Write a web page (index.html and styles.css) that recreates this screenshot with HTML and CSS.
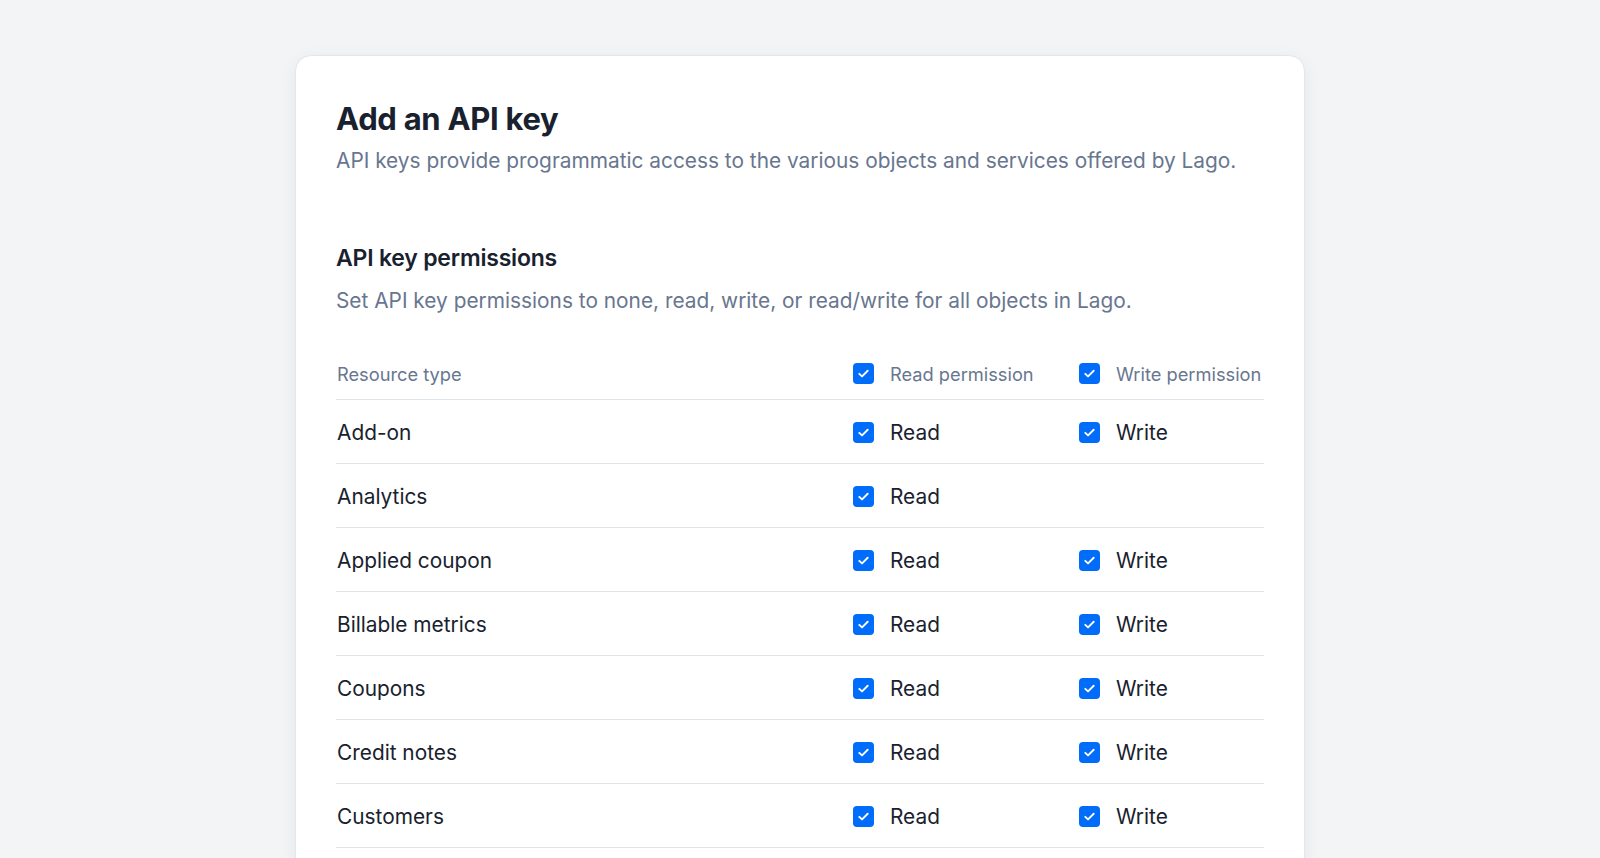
FILE: index.html
```html
<!DOCTYPE html>
<html lang="en">
<head>
<meta charset="utf-8">
<title>Add an API key</title>
<link rel="stylesheet" href="styles.css">
</head>
<body>
<main class="page">
  <section class="card">
    <header class="intro">
      <h1 class="title">Add an API key</h1>
      <p class="lead">API keys provide programmatic access to the various objects and services offered by Lago.</p>
    </header>
    <section class="perms">
      <h2 class="perms-title">API key permissions</h2>
      <p class="lead">Set API key permissions to none, read, write, or read/write for all objects in Lago.</p>
      <div class="table">
        <div class="row head">
          <div class="cell name">Resource type</div>
          <div class="cell"><span class="cb"><svg viewBox="0 0 20 20"><path d="M6 10.3l2.6 2.5L14 7.4"/></svg></span><span>Read permission</span></div>
          <div class="cell"><span class="cb"><svg viewBox="0 0 20 20"><path d="M6 10.3l2.6 2.5L14 7.4"/></svg></span><span>Write permission</span></div>
        </div>
        <div class="row">
          <div class="cell name">Add-on</div>
          <div class="cell"><span class="cb"><svg viewBox="0 0 20 20"><path d="M6 10.3l2.6 2.5L14 7.4"/></svg></span><span>Read</span></div>
          <div class="cell"><span class="cb"><svg viewBox="0 0 20 20"><path d="M6 10.3l2.6 2.5L14 7.4"/></svg></span><span>Write</span></div>
        </div>
        <div class="row">
          <div class="cell name">Analytics</div>
          <div class="cell"><span class="cb"><svg viewBox="0 0 20 20"><path d="M6 10.3l2.6 2.5L14 7.4"/></svg></span><span>Read</span></div>
          <div class="cell"></div>
        </div>
        <div class="row">
          <div class="cell name">Applied coupon</div>
          <div class="cell"><span class="cb"><svg viewBox="0 0 20 20"><path d="M6 10.3l2.6 2.5L14 7.4"/></svg></span><span>Read</span></div>
          <div class="cell"><span class="cb"><svg viewBox="0 0 20 20"><path d="M6 10.3l2.6 2.5L14 7.4"/></svg></span><span>Write</span></div>
        </div>
        <div class="row">
          <div class="cell name">Billable metrics</div>
          <div class="cell"><span class="cb"><svg viewBox="0 0 20 20"><path d="M6 10.3l2.6 2.5L14 7.4"/></svg></span><span>Read</span></div>
          <div class="cell"><span class="cb"><svg viewBox="0 0 20 20"><path d="M6 10.3l2.6 2.5L14 7.4"/></svg></span><span>Write</span></div>
        </div>
        <div class="row">
          <div class="cell name">Coupons</div>
          <div class="cell"><span class="cb"><svg viewBox="0 0 20 20"><path d="M6 10.3l2.6 2.5L14 7.4"/></svg></span><span>Read</span></div>
          <div class="cell"><span class="cb"><svg viewBox="0 0 20 20"><path d="M6 10.3l2.6 2.5L14 7.4"/></svg></span><span>Write</span></div>
        </div>
        <div class="row">
          <div class="cell name">Credit notes</div>
          <div class="cell"><span class="cb"><svg viewBox="0 0 20 20"><path d="M6 10.3l2.6 2.5L14 7.4"/></svg></span><span>Read</span></div>
          <div class="cell"><span class="cb"><svg viewBox="0 0 20 20"><path d="M6 10.3l2.6 2.5L14 7.4"/></svg></span><span>Write</span></div>
        </div>
        <div class="row">
          <div class="cell name">Customers</div>
          <div class="cell"><span class="cb"><svg viewBox="0 0 20 20"><path d="M6 10.3l2.6 2.5L14 7.4"/></svg></span><span>Read</span></div>
          <div class="cell"><span class="cb"><svg viewBox="0 0 20 20"><path d="M6 10.3l2.6 2.5L14 7.4"/></svg></span><span>Write</span></div>
        </div>
      </div>
    </section>
  </section>
</main>
</body>
</html>
```
FILE: styles.css
```css
html, body {
  margin: 0;
  padding: 0;
  height: 100%;
  overflow: hidden;
}
body {
  background: #f3f4f6;
  font-family: Inter, "Noto Sans", "Liberation Sans", sans-serif;
  color: #19212e;
}
.page {
  display: flex;
  justify-content: center;
  padding-top: 55px;
}
.card {
  width: 1010px;
  box-sizing: border-box;
  background: #ffffff;
  border: 1px solid #e3e6eb;
  border-radius: 16px;
  box-shadow: 0 4px 18px rgba(25, 33, 46, 0.06);
  padding: 43px 40px 40px;
}
.title {
  margin: 0;
  font-size: 31px;
  line-height: 40px;
  font-weight: 700;
  letter-spacing: -0.3px;
}
.lead {
  margin: 0;
  font-size: 20.85px;
  line-height: 28px;
  color: #68768f;
}
.intro .lead {
  margin-top: 8px;
}
.perms {
  margin-top: 69px;
}
.perms-title {
  margin: 0;
  font-size: 23px;
  line-height: 28px;
  font-weight: 600;
  letter-spacing: -0.2px;
}
.perms .lead {
  margin-top: 15px;
}
.table {
  margin-top: 33px;
}
.row {
  display: grid;
  grid-template-columns: 1fr 226px 185px;
  align-items: center;
  box-sizing: border-box;
  height: 64px;
  padding-top: 2px;
  border-bottom: 1px solid #dfe3ea;
  font-size: 20.85px;
}
.row.head {
  height: 52px;
  padding-top: 0;
  font-size: 18.25px;
  color: #68768f;
}
.cell {
  display: flex;
  align-items: center;
  gap: 16px;
  white-space: nowrap;
}
.name {
  padding-left: 1px;
}
.cb {
  width: 21px;
  height: 21px;
  border-radius: 4px;
  background: #006cfa;
  display: inline-flex;
  align-items: center;
  justify-content: center;
  flex: none;
}
.cb svg {
  width: 21px;
  height: 21px;
  fill: none;
  stroke: #ffffff;
  stroke-width: 1.8;
  stroke-linecap: round;
  stroke-linejoin: round;
}
```
